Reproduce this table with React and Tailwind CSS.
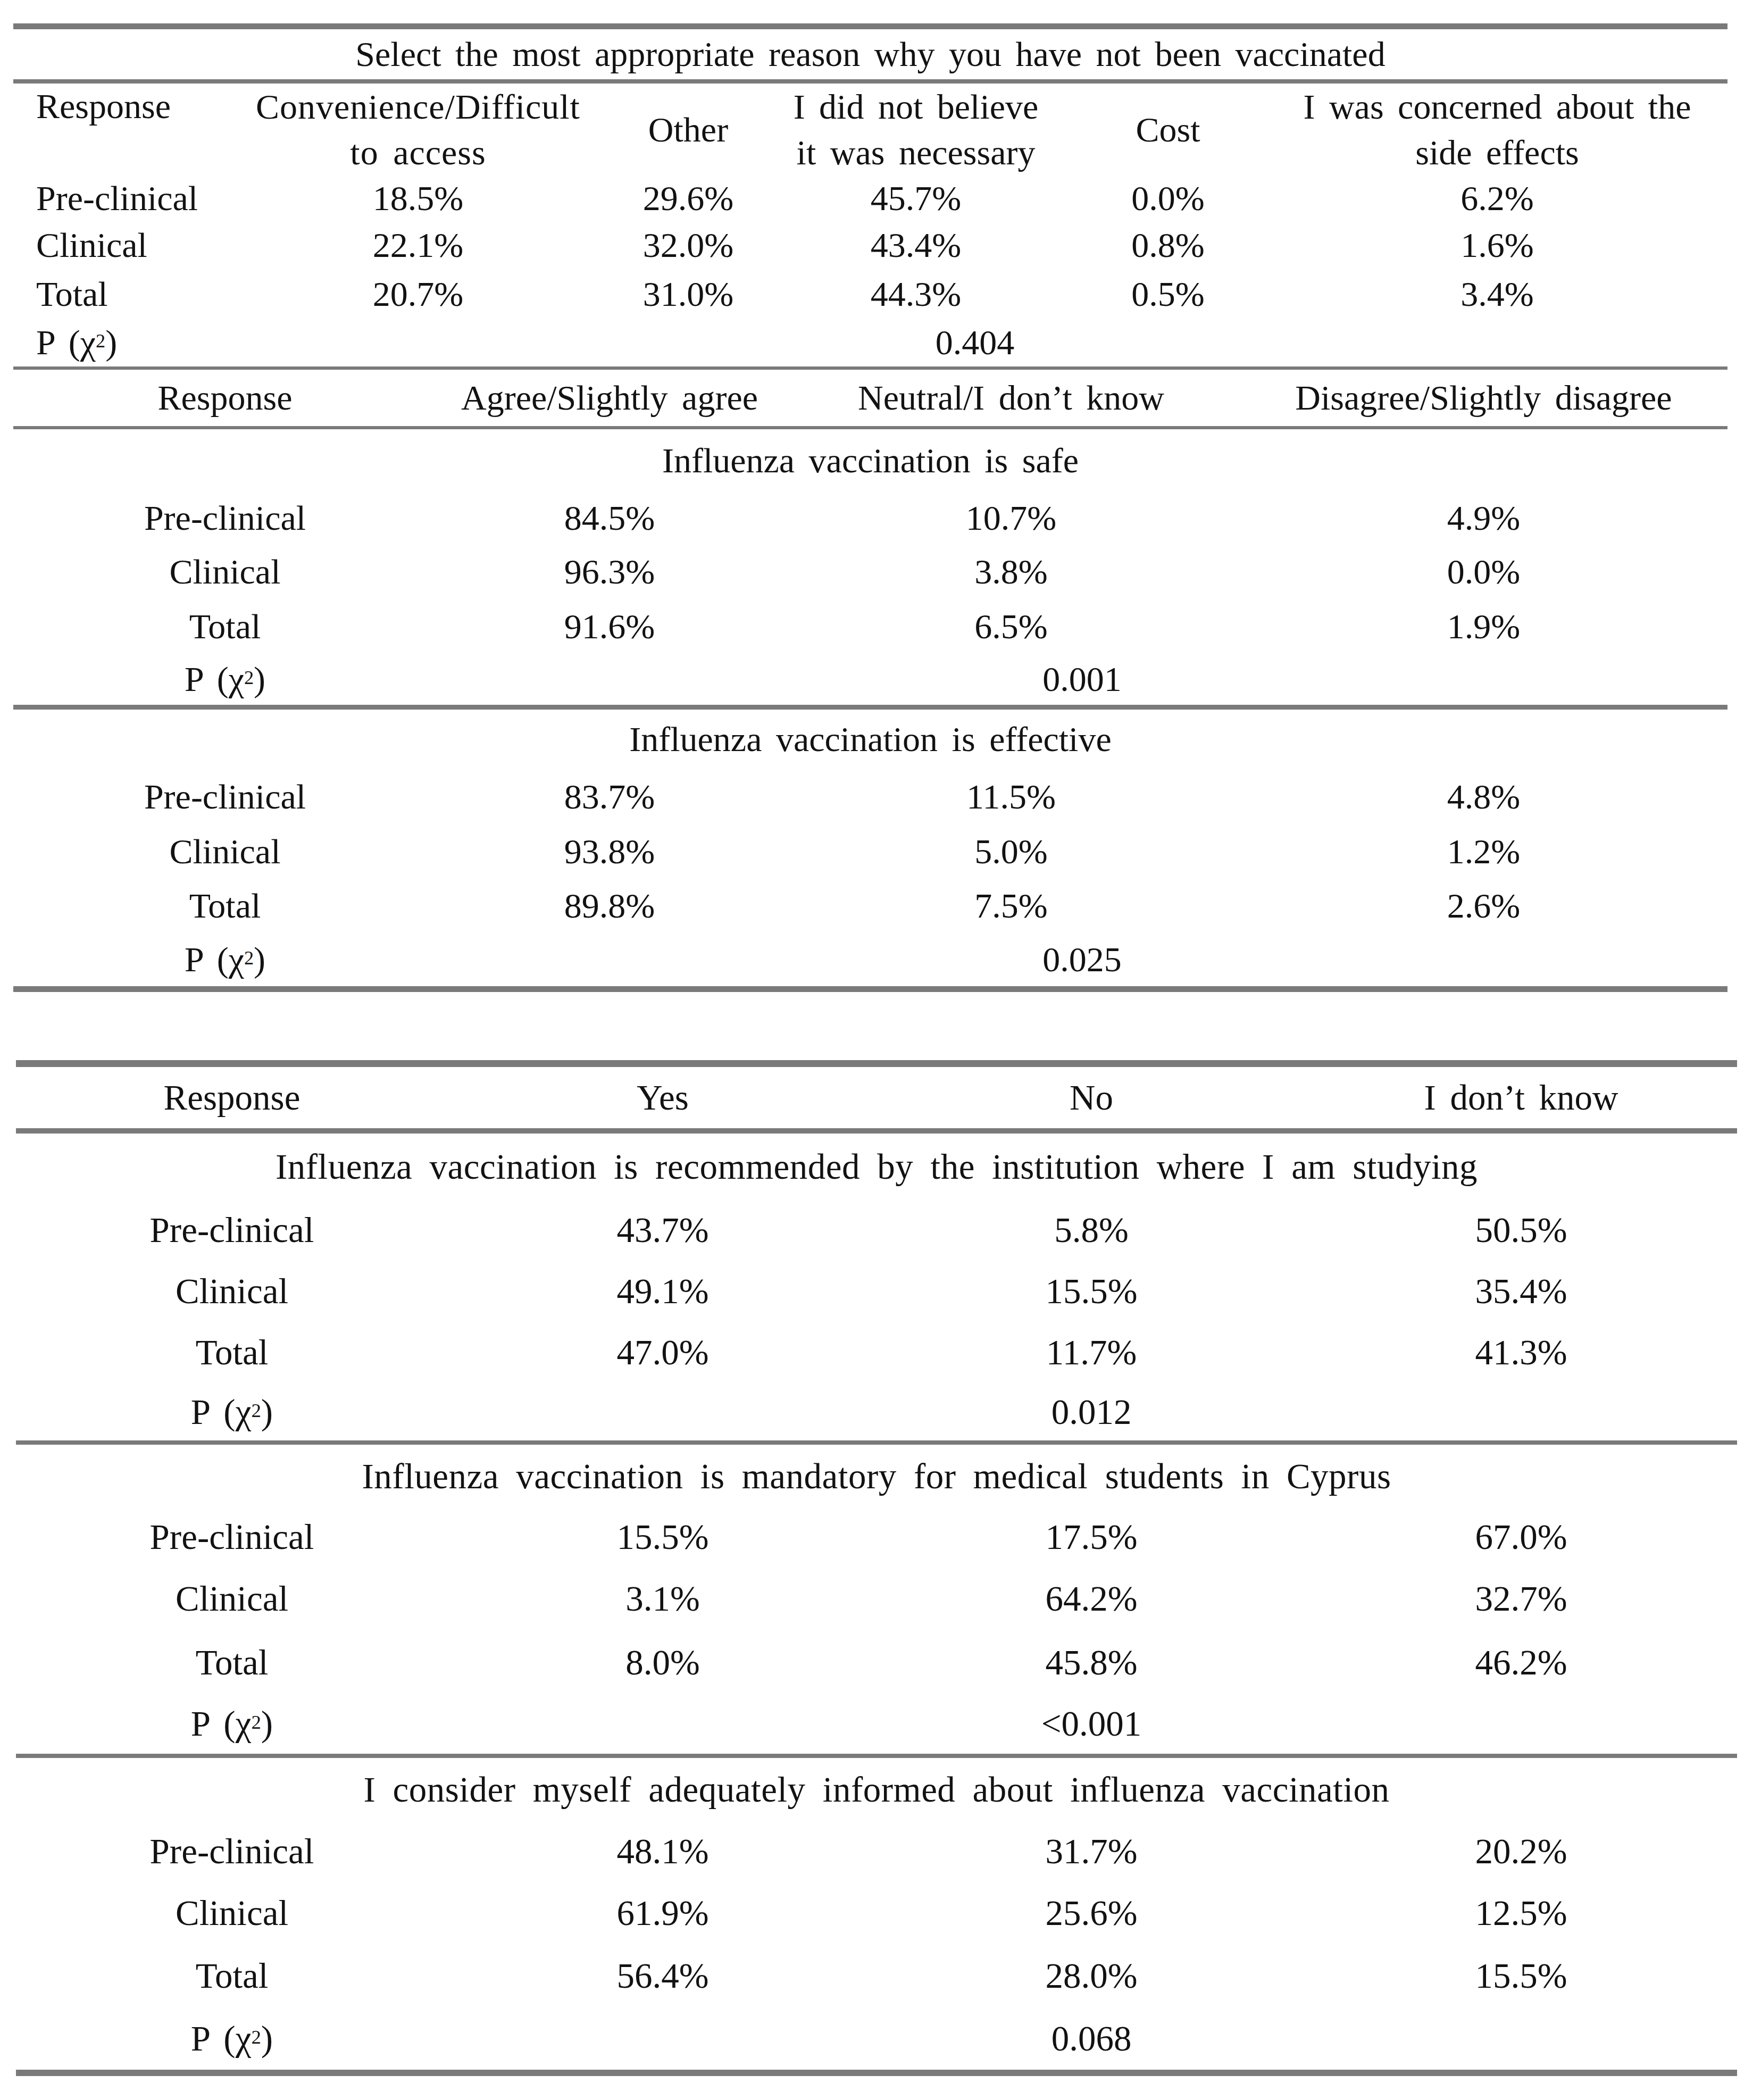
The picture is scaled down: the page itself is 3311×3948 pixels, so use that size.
import React from 'react'

const serif = "font-['Liberation_Serif','Times_New_Roman',serif]"

const Rule = ({ className }) => <div className={`bg-[#7a7a7a] ${className}`} />

const Chi = () => (
  <span>
    P (χ<sup className="text-[0.55em] relative -top-[0.35em] align-baseline">2</sup>)
  </span>
)

const reasonRows = [
  { label: 'Pre-clinical', values: ['18.5%', '29.6%', '45.7%', '0.0%', '6.2%'], h: 'h-[84px]' },
  { label: 'Clinical', values: ['22.1%', '32.0%', '43.4%', '0.8%', '1.6%'], h: 'h-[92px]' },
  { label: 'Total', values: ['20.7%', '31.0%', '44.3%', '0.5%', '3.4%'], h: 'h-[92px]' },
]

const attitudeSections = [
  {
    title: 'Influenza vaccination is safe',
    titleH: 'h-[118px]',
    rows: [
      { label: 'Pre-clinical', values: ['84.5%', '10.7%', '4.9%'], h: 'h-[97px]' },
      { label: 'Clinical', values: ['96.3%', '3.8%', '0.0%'], h: 'h-[105px]' },
      { label: 'Total', values: ['91.6%', '6.5%', '1.9%'], h: 'h-[102px]' },
    ],
    p: '0.001',
    pH: 'h-[96px]',
  },
  {
    title: 'Influenza vaccination is effective',
    titleH: 'h-[112px]',
    rows: [
      { label: 'Pre-clinical', values: ['83.7%', '11.5%', '4.8%'], h: 'h-[104px]' },
      { label: 'Clinical', values: ['93.8%', '5.0%', '1.2%'], h: 'h-[102px]' },
      { label: 'Total', values: ['89.8%', '7.5%', '2.6%'], h: 'h-[101px]' },
    ],
    p: '0.025',
    pH: 'h-[101px]',
  },
]

const knowledgeSections = [
  {
    title: 'Influenza vaccination is recommended by the institution where I am studying',
    titleH: 'h-[124px]',
    rows: [
      { label: 'Pre-clinical', values: ['43.7%', '5.8%', '50.5%'], h: 'h-[114px]' },
      { label: 'Clinical', values: ['49.1%', '15.5%', '35.4%'], h: 'h-[116px]' },
      { label: 'Total', values: ['47.0%', '11.7%', '41.3%'], h: 'h-[115px]' },
    ],
    p: '0.012',
    pH: 'h-[108px]',
  },
  {
    title: 'Influenza vaccination is mandatory for medical students in Cyprus',
    titleH: 'h-[118px]',
    rows: [
      { label: 'Pre-clinical', values: ['15.5%', '17.5%', '67.0%'], h: 'h-[110px]' },
      { label: 'Clinical', values: ['3.1%', '64.2%', '32.7%'], h: 'h-[122px]' },
      { label: 'Total', values: ['8.0%', '45.8%', '46.2%'], h: 'h-[118px]' },
    ],
    p: '<0.001',
    pH: 'h-[113px]',
  },
  {
    title: 'I consider myself adequately informed about influenza vaccination',
    titleH: 'h-[118px]',
    rows: [
      { label: 'Pre-clinical', values: ['48.1%', '31.7%', '20.2%'], h: 'h-[115px]' },
      { label: 'Clinical', values: ['61.9%', '25.6%', '12.5%'], h: 'h-[117px]' },
      { label: 'Total', values: ['56.4%', '28.0%', '15.5%'], h: 'h-[118px]' },
    ],
    p: '0.068',
    pH: 'h-[118px]',
  },
]

function ReasonTable() {
  const cols = 'grid grid-cols-[415px_692px_324px_532px_416px_822px]'
  return (
    <div>
      <div className={`${cols} h-[174px]`}>
        <div className="pl-[43px] leading-[86px]">Response</div>
        <div className="flex flex-col items-center justify-center leading-[86px] tracking-[1px]">
          <span>Convenience/Difficult</span>
          <span>to access</span>
        </div>
        <div className="flex items-center justify-center">Other</div>
        <div className="flex flex-col items-center justify-center leading-[86px]">
          <span>I did not believe</span>
          <span>it was necessary</span>
        </div>
        <div className="flex items-center justify-center">Cost</div>
        <div className="flex flex-col items-center justify-center leading-[86px]">
          <span>I was concerned about the</span>
          <span>side effects</span>
        </div>
      </div>
      {reasonRows.map((row) => (
        <div key={row.label} className={`${cols} ${row.h} items-center`}>
          <div className="pl-[43px]">{row.label}</div>
          {row.values.map((v, i) => (
            <div key={i} className="text-center">{v}</div>
          ))}
        </div>
      ))}
      <div className={`${cols} h-[90px] items-center`}>
        <div className="pl-[43px]"><Chi /></div>
        <div className="col-span-5 text-center">0.404</div>
      </div>
    </div>
  )
}

function Section({ section, cols, pSpan, titleClass }) {
  return (
    <div>
      <div className={`${section.titleH} flex items-center justify-center ${titleClass}`}>{section.title}</div>
      {section.rows.map((row) => (
        <div key={row.label} className={`${cols} ${row.h} items-center text-center`}>
          <div>{row.label}</div>
          {row.values.map((v, i) => (
            <div key={i}>{v}</div>
          ))}
        </div>
      ))}
      <div className={`${cols} ${section.pH} items-center text-center`}>
        <div><Chi /></div>
        <div className={pSpan}>{section.p}</div>
      </div>
    </div>
  )
}

export default function App() {
  const cols1 = 'grid grid-cols-[796px_650px_860px_917px]'
  const cols2 = 'grid grid-cols-[812px_808px_804px_812px]'
  return (
    <div className={`${serif} bg-white text-[#121212] w-[3311px] h-[3948px] pt-[44px] text-[66px] leading-none [word-spacing:10px]`}>
      <div className="ml-[25px] w-[3223px]">
        <Rule className="h-[11px]" />
        <div className="h-[94px] flex items-center justify-center">
          Select the most appropriate reason why you have not been vaccinated
        </div>
        <Rule className="h-[8px]" />
        <ReasonTable />
        <Rule className="h-[6px]" />
        <div className={`${cols1} h-[106px] items-center text-center`}>
          <div>Response</div>
          <div>Agree/Slightly agree</div>
          <div>Neutral/I don’t know</div>
          <div>Disagree/Slightly disagree</div>
        </div>
        <Rule className="h-[6px]" />
        <Section section={attitudeSections[0]} cols={cols1} pSpan="col-span-3" titleClass="" />
        <Rule className="h-[9px]" />
        <Section section={attitudeSections[1]} cols={cols1} pSpan="col-span-3" titleClass="" />
        <Rule className="h-[11px]" />
      </div>

      <div className="ml-[30px] w-[3236px] mt-[128px] text-[67px]">
        <Rule className="h-[13px]" />
        <div className={`${cols2} h-[115px] items-center text-center`}>
          <div>Response</div>
          <div>Yes</div>
          <div>No</div>
          <div>I don’t know</div>
        </div>
        <Rule className="h-[10px]" />
        {knowledgeSections.map((section, i) => (
          <div key={section.title}>
            <Section section={section} cols={cols2} pSpan="col-start-3" titleClass="[word-spacing:15px] tracking-[0.5px]" />
            <Rule className={i === knowledgeSections.length - 1 ? 'h-[12px]' : 'h-[8px]'} />
          </div>
        ))}
      </div>
    </div>
  )
}
